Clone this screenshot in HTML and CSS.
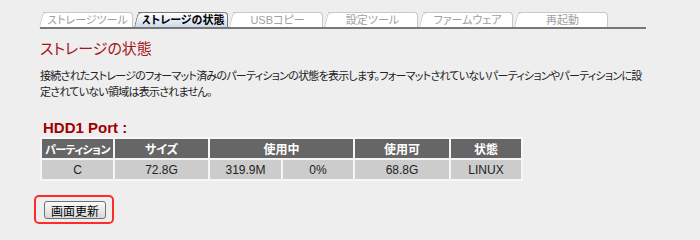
FILE: index.html
```html
<!DOCTYPE html>
<html lang="ja">
<head>
    <meta charset="UTF-8">
    <title>ストレージの状態</title>
    <link rel="stylesheet" href="styles.css">
</head>
<body>
    <div class="page">
        <ul class="tabs">
            <li class="tab">ストレージツール</li>
            <li class="tab active">ストレージの状態</li>
            <li class="tab">USBコピー</li>
            <li class="tab">設定ツール</li>
            <li class="tab">ファームウェア</li>
            <li class="tab">再起動</li>
        </ul>

        <h2 class="title">ストレージの状態</h2>

        <p class="desc">接続されたストレージのフォーマット済みのパーティションの状態を表示します。フォーマットされていないパーティションやパーティションに設<br>定されていない領域は表示されません。</p>

        <h3 class="port">HDD1 Port :</h3>
        <table class="status">
            <tr>
                <th class="c1">パーティション</th>
                <th class="c2">サイズ</th>
                <th colspan="2">使用中</th>
                <th class="c5">使用可</th>
                <th class="c6">状態</th>
            </tr>
            <tr>
                <td>C</td>
                <td>72.8G</td>
                <td class="c3">319.9M</td>
                <td class="c4">0%</td>
                <td>68.8G</td>
                <td>LINUX</td>
            </tr>
        </table>

        <div class="actions">
            <button class="refresh">画面更新</button>
        </div>
    </div>
</body>
</html>
```

FILE: styles.css
```css
body {
    margin: 0;
    background: #eeeeee;
    font-family: "Liberation Sans", "Noto Sans CJK JP", sans-serif;
    font-size: 12px;
    color: #222;
    font-feature-settings: "palt";
}

.page {
    padding: 12px 0 0 40px;
}

.tabs {
    display: flex;
    gap: 2px;
    list-style: none;
    margin: 0;
    padding: 0;
    width: 606px;
    height: 15px;
    border-bottom: 2px solid #777;
}

.tab {
    position: relative;
    width: 90px;
    margin-left: 3px;
    height: 15px;
    line-height: 15px;
    background: #fff;
    border-top: 1px solid #c8c8c8;
    border-right: 1px solid #c8c8c8;
    border-top-right-radius: 4px;
    box-sizing: border-box;
    text-align: center;
    font-size: 11px;
    color: #a0a0a0;
}

.tab::before {
    content: "";
    position: absolute;
    left: -4px;
    top: -1px;
    width: 8px;
    height: 15px;
    background: #fff;
    border-left: 1px solid #c8c8c8;
    border-top: 1px solid #c8c8c8;
    border-top-left-radius: 5px;
    transform: skewX(-14deg);
    transform-origin: bottom left;
    box-sizing: border-box;
}

.tab.active {
    background: linear-gradient(#ffffff, #ccdaea);
    border-color: #777;
    color: #000;
    font-weight: bold;
}

.tab.active::before {
    background: linear-gradient(#ffffff, #ccdaea);
    border-color: #777;
}

.title {
    margin: 10px 0 0;
    font-size: 15px;
    font-weight: normal;
    color: #a8141c;
    line-height: 20px;
}

.desc {
    margin: 9px 0 0;
    line-height: 16px;
    font-size: 11px;
    letter-spacing: -0.75px;
    white-space: nowrap;
}

.port {
    margin: 20px 0 0 3px;
    font-size: 15px;
    line-height: 16px;
    color: #a00000;
}

.status {
    margin: 1px 0 0;
    border-collapse: separate;
    border-spacing: 2px 2px;
    background: #f6f6f6;
    text-align: center;
}

.status th {
    background: #666;
    color: #fff;
    height: 19px;
    padding: 0;
    font-size: 12px;
    white-space: nowrap;
}

.status th.c1 {
    font-size: 11px;
    letter-spacing: -0.6px;
}

.status td {
    background: #ccc;
    height: 19px;
    padding: 0;
    color: #222;
}

.c1 { width: 71px; }
.c2 { width: 93px; }
.c3 { width: 71px; }
.c4 { width: 70px; }
.c5 { width: 94px; }
.c6 { width: 70px; }

.actions {
    display: inline-block;
    margin: 14px 0 0 -6px;
    padding: 4px 6px 3px 8px;
    border: 2px solid #ff2a2a;
    border-radius: 5px;
}

.refresh {
    display: block;
    width: 62px;
    height: 18px;
    padding: 0;
    font-family: "Noto Sans CJK JP", sans-serif;
    font-size: 12px;
    color: #000;
    background: linear-gradient(#fafafa, #d8d8d8);
    border: 1px solid #707070;
    border-radius: 3px;
}
```
